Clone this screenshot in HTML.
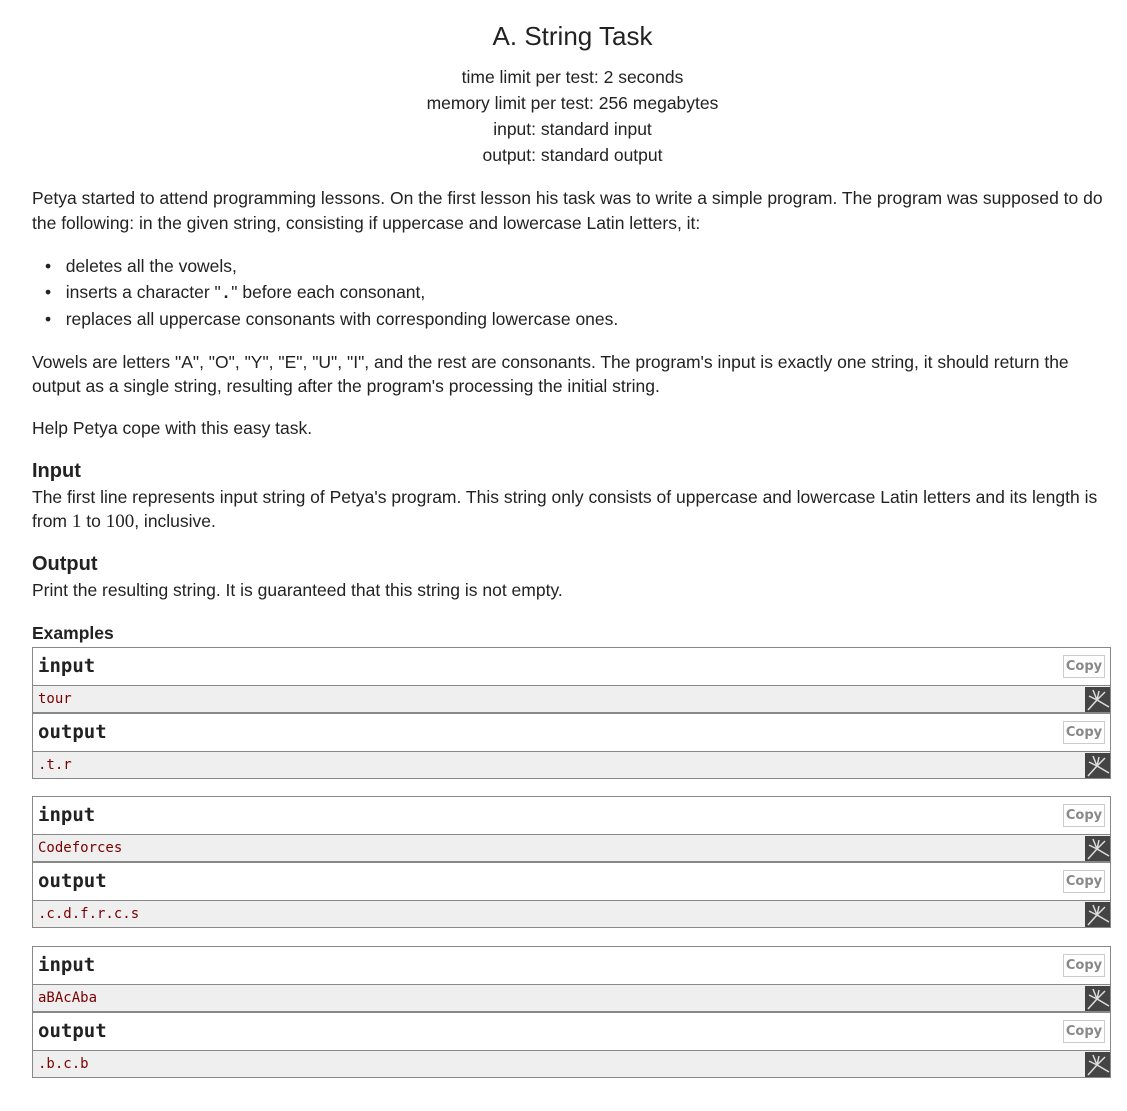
<!DOCTYPE html>
<html><head><meta charset="utf-8"><style>
body{margin:0;background:#fff;width:1127px;height:1111px;position:relative;font-family:"Liberation Sans",Arial,sans-serif;color:#222;overflow:hidden}
.a{position:absolute;white-space:nowrap}
.c{left:9px;width:1127px;text-align:center}
.t{font-size:17.5px}
.h{font-size:20px;font-weight:bold}
.ex{position:absolute;left:32px;width:1077px;border:1px solid #888}
.hd{height:37px;position:relative;border-bottom:1px solid #888;background:#fff}
.hd span{position:absolute;left:5px;top:7px;font-family:"DejaVu Sans Mono","Liberation Mono",monospace;font-weight:bold;font-size:19px;color:#222}
.cp{position:absolute;right:5px;top:7px;width:40px;height:21px;border:1px solid #ccc;font-size:13px;font-weight:bold;color:#888;text-align:center;line-height:21px;font-family:"DejaVu Sans","Liberation Sans",sans-serif}
.dt{height:26px;position:relative;background:#efefef}
.dt span{position:absolute;left:5px;top:5px;font-family:"DejaVu Sans Mono","Liberation Mono",monospace;font-size:14px;color:#7a0000}
.ic{position:absolute;right:0;top:1px;width:25px;height:25px;background:#444}
.sep{border-bottom:2px solid #888}
</style></head><body>
<div class="a c" style="top:21px;font-size:26px">A. String Task</div>
<div class="a c t" style="top:67px">time limit per test: 2 seconds</div>
<div class="a c t" style="top:93px">memory limit per test: 256 megabytes</div>
<div class="a c t" style="top:119px">input: standard input</div>
<div class="a c t" style="top:145px">output: standard output</div>
<div class="a t" style="left:32px;top:188px">Petya started to attend programming lessons. On the first lesson his task was to write a simple program. The program was supposed to do</div>
<div class="a t" style="left:32px;top:213px">the following: in the given string, consisting if uppercase and lowercase Latin letters, it:</div>
<div class="a t" style="left:45px;top:256px">•&nbsp;&nbsp;&nbsp;deletes all the vowels,</div>
<div class="a t" style="left:45px;top:282px">•&nbsp;&nbsp;&nbsp;inserts a character "<b style="font-family:'Liberation Mono',monospace">.</b>" before each consonant,</div>
<div class="a t" style="left:45px;top:309px">•&nbsp;&nbsp;&nbsp;replaces all uppercase consonants with corresponding lowercase ones.</div>
<div class="a t" style="left:32px;top:352px">Vowels are letters "A", "O", "Y", "E", "U", "I", and the rest are consonants. The program's input is exactly one string, it should return the</div>
<div class="a t" style="left:32px;top:376px">output as a single string, resulting after the program's processing the initial string.</div>
<div class="a t" style="left:32px;top:418px">Help Petya cope with this easy task.</div>
<div class="a h" style="left:32px;top:460px">Input</div>
<div class="a t" style="left:32px;top:487px">The first line represents input string of Petya's program. This string only consists of uppercase and lowercase Latin letters and its length is</div>
<div class="a t" style="left:32px;top:511px">from <span style="font-family:'Liberation Serif',serif;font-size:19px">1</span> to <span style="font-family:'Liberation Serif',serif;font-size:19px">100</span>, inclusive.</div>
<div class="a h" style="left:32px;top:553px">Output</div>
<div class="a t" style="left:32px;top:580px">Print the resulting string. It is guaranteed that this string is not empty.</div>
<div class="a" style="left:32px;top:623px;font-size:17.5px;font-weight:bold">Examples</div>

<svg width="0" height="0" style="position:absolute"><symbol id="i" viewBox="0 0 25 25"><g stroke="#ddd" stroke-width="1.5" fill="none"><path d="M3 23 L12 13 L24 20 M12 13 L8 3 M12 13 L14 4 M12 13 L20 5 M12 13 L4 9"/></g></symbol></svg>
<div class="ex" style="top:647px">
<div class="hd"><span>input</span><div class="cp">Copy</div></div>
<div class="dt sep"><span>tour</span><svg class="ic"><use href="#i"/></svg></div>
<div class="hd"><span>output</span><div class="cp">Copy</div></div>
<div class="dt"><span>.t.r</span><svg class="ic"><use href="#i"/></svg></div>
</div>
<div class="ex" style="top:796px">
<div class="hd"><span>input</span><div class="cp">Copy</div></div>
<div class="dt sep"><span>Codeforces</span><svg class="ic"><use href="#i"/></svg></div>
<div class="hd"><span>output</span><div class="cp">Copy</div></div>
<div class="dt"><span>.c.d.f.r.c.s</span><svg class="ic"><use href="#i"/></svg></div>
</div>
<div class="ex" style="top:946px">
<div class="hd"><span>input</span><div class="cp">Copy</div></div>
<div class="dt sep"><span>aBAcAba</span><svg class="ic"><use href="#i"/></svg></div>
<div class="hd"><span>output</span><div class="cp">Copy</div></div>
<div class="dt"><span>.b.c.b</span><svg class="ic"><use href="#i"/></svg></div>
</div>
</body></html>
